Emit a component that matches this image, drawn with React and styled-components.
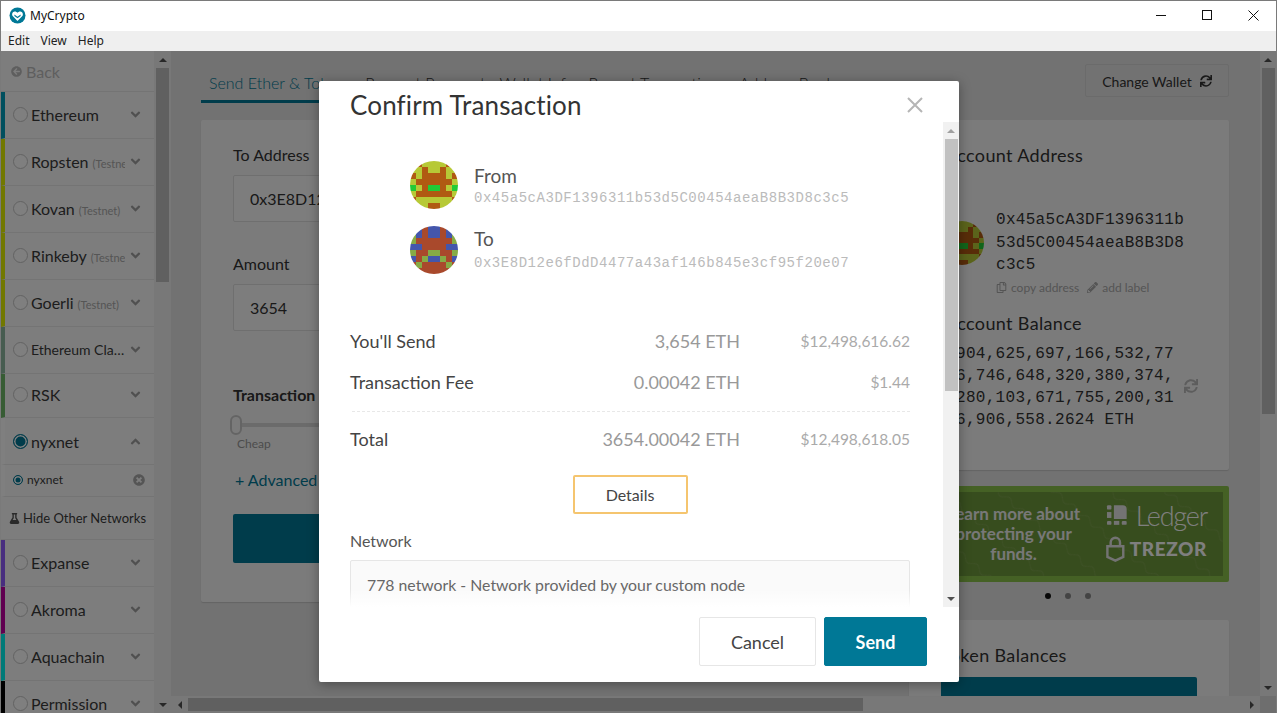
import React from 'react'
import styled, { createGlobalStyle } from 'styled-components'
import {
  FaAngleDown,
  FaAngleUp,
  FaArrowCircleLeft,
  FaFlask,
  FaPencilAlt,
  FaRegCopy,
  FaSync,
  FaTimesCircle,
} from 'react-icons/fa'

const SANS = `Lato, "Open Sans", "Liberation Sans", sans-serif`
const MONO = `"Liberation Mono", "DejaVu Sans Mono", monospace`

const GlobalStyle = createGlobalStyle`
  html, body { margin: 0; padding: 0; height: 100%; overflow: hidden; }
  * { box-sizing: border-box; }
  body { font-family: ${SANS}; color: #333; background: #fff; }
`

const Window = styled.div`
  height: 100vh;
  display: flex;
  flex-direction: column;
  border: 1px solid #7a7a7a;
  border-bottom: 0;
  overflow: hidden;
`

const TitleBar = styled.div`
  height: 30px;
  flex: none;
  display: flex;
  align-items: center;
  background: #fff;
  padding: 0 0 2px 8px;
`

const AppName = styled.div`
  font-family: "Noto Sans", "Open Sans", sans-serif;
  font-size: 12px;
  color: #111;
  margin-left: 4px;
`

const WindowControls = styled.div`
  margin-left: auto;
  display: flex;
  height: 100%;
`

const WindowButton = styled.div`
  width: 46px;
  display: flex;
  align-items: center;
  justify-content: center;
`

const MenuBar = styled.div`
  height: 20px;
  flex: none;
  display: flex;
  align-items: center;
  gap: 11px;
  padding: 0 0 2px 7px;
  background: #efefef;
  font-family: "Noto Sans", "Open Sans", sans-serif;
  font-size: 12px;
  color: #222;
`

const Body = styled.div`
  position: relative;
  flex: 1;
  min-height: 0;
  display: flex;
`

const Overlay = styled.div`
  position: absolute;
  inset: 0;
  background: rgba(0, 0, 0, 0.5);
`

/* sidebar */
const Sidebar = styled.div`
  width: 153px;
  flex: none;
  overflow: hidden;
  background: #fbfbfb;
`

const BackRow = styled.div`
  height: 41px;
  display: flex;
  align-items: center;
  gap: 4px;
  padding-left: 10px;
  font-size: 16px;
  color: #bdbdbd;
  border-bottom: 1px solid #e8e8e8;
`

const NetRow = styled.div`
  height: ${({ $height }) => $height || 47}px;
  display: flex;
  align-items: center;
  padding: 0 13px 2px 8px;
  border-left: 4px solid ${({ $color }) => $color};
  border-bottom: 1px solid #e8e8e8;
  color: #3a3a3a;
`

const ActiveNetRow = styled(NetRow)`
  padding-bottom: 0;
`

const Radio = styled.span`
  width: 15px;
  height: 15px;
  flex: none;
  border-radius: 50%;
  border: 1px solid #c4c4c4;
  background: ${({ $on }) => ($on ? '#007896' : '#fff')};
  box-shadow: ${({ $on }) => ($on ? 'inset 0 0 0 1.5px #fff' : 'none')};
  ${({ $on }) => $on && 'border-color: #007896;'}
`

const NetName = styled.div`
  flex: 1;
  min-width: 0;
  margin-left: 3px;
  margin-right: 5px;
  font-size: ${({ $small }) => ($small ? 14 : 16)}px;
  white-space: nowrap;
  overflow: hidden;
  text-overflow: ${({ $small }) => ($small ? 'ellipsis' : 'clip')};
`

const NetTag = styled.small`
  font-size: 11px;
  color: #aaa;
  margin-left: 4px;
`

const Chevron = styled.span`
  display: flex;
  width: 11px;
  justify-content: center;
  font-size: 15px;
  color: #a0a0a0;
`

const SubRow = styled.div`
  height: 32px;
  display: flex;
  align-items: center;
  padding: 0 9px 2px 8px;
  border-left: 4px solid #fff;
  border-bottom: 1px solid #e8e8e8;
  font-size: 12px;
  color: #3a3a3a;
`

const SubRadio = styled(Radio)`
  width: 10px;
  height: 10px;
  margin-right: 4px;
`

const SubRemove = styled.span`
  margin-left: auto;
  display: flex;
  font-size: 12px;
  color: #aaa;
`

const HideRow = styled.div`
  height: 43px;
  display: flex;
  align-items: center;
  gap: 3px;
  padding-left: 8px;
  font-size: 13px;
  color: #3a3a3a;
  white-space: nowrap;
  border-bottom: 1px solid #e8e8e8;
  svg { font-size: 11px; color: #555; }
`

/* fake native scrollbars */
const VBar = styled.div`
  width: ${({ $width }) => $width || 17}px;
  flex: none;
  display: flex;
  flex-direction: column;
  align-items: center;
  background: ${({ $track }) => $track || '#f1f1f1'};
`

const ArrowBox = styled.div`
  height: 17px;
  flex: none;
  display: flex;
  align-items: center;
  justify-content: center;
`

const Arrow = styled.span`
  width: 0;
  height: 0;
  border-left: 4px solid transparent;
  border-right: 4px solid transparent;
  ${({ $dir }) => ($dir === 'up' ? 'border-bottom' : 'border-top')}: 4px solid ${({ $color }) => $color || '#505050'};
`

const VThumb = styled.div`
  width: 13px;
  height: ${({ $size }) => $size}px;
  flex: none;
  background: #c1c1c1;
`

const VSpacer = styled.div`
  flex: 1;
`

const HBar = styled.div`
  height: 17px;
  flex: none;
  display: flex;
  align-items: center;
  background: #f1f1f1;
`

const HArrowBox = styled.div`
  width: 17px;
  height: 17px;
  flex: none;
  display: flex;
  align-items: center;
  justify-content: center;
`

const HArrow = styled.span`
  width: 0;
  height: 0;
  border-top: 4px solid transparent;
  border-bottom: 4px solid transparent;
  ${({ $dir }) => ($dir === 'left' ? 'border-right' : 'border-left')}: 4px solid #505050;
`

const HThumb = styled.div`
  width: 675px;
  height: 13px;
  flex: none;
  background: #c1c1c1;
`

const HCorner = styled.div`
  width: 16px;
  height: 17px;
  flex: none;
  background: #dcdcdc;
`

/* main page behind the modal */
const MainColumn = styled.div`
  flex: 1;
  min-width: 0;
  display: flex;
  flex-direction: column;
`

const MainRow = styled.div`
  flex: 1;
  min-height: 0;
  display: flex;
`

const Page = styled.div`
  flex: 1;
  min-width: 0;
  overflow: hidden;
  padding: 13px 31px 0 30px;
  background: #e4e4e4;
`

const PageHead = styled.div`
  height: 40px;
  display: flex;
  margin-bottom: 16px;
`

const Tab = styled.div`
  height: 39px;
  padding: 9px 6px 0 8px;
  font-size: 16px;
  font-weight: 300;
  white-space: nowrap;
  color: ${({ $active }) => ($active ? '#007896' : '#333')};
  border-bottom: 3px solid ${({ $active }) => ($active ? '#007896' : 'transparent')};
`

const ChangeWallet = styled.div`
  margin-left: auto;
  width: 144px;
  height: 33px;
  display: flex;
  align-items: center;
  justify-content: center;
  gap: 8px;
  padding-top: 1px;
  font-size: 14px;
  color: #333;
  border: 1px solid #d6d6d6;
  border-radius: 2px;
  svg { font-size: 12px; }
`

const PageGrid = styled.div`
  display: grid;
  grid-template-columns: 692px 320px;
  gap: 16px;
`

const Card = styled.div`
  background: #f7f7f7;
  border-radius: 2px;
  box-shadow: 0 1px 1px rgba(0, 0, 0, 0.12);
`

const FormCard = styled(Card)`
  height: 482px;
  padding: 24px 32px;
`

const FieldLabel = styled.div`
  font-size: 16px;
  line-height: 22px;
  margin-bottom: 9px;
  font-weight: ${({ $bold }) => ($bold ? 700 : 400)};
  margin-top: ${({ $bold }) => ($bold ? 53 : 0)}px;
`

const TextBox = styled.div`
  height: 47px;
  display: flex;
  align-items: center;
  padding-left: 16px;
  font-size: 16px;
  color: #333;
  background: #fbfbfb;
  border: 1px solid #dedede;
  border-radius: 2px;
  margin-bottom: 31px;
`

const Slider = styled.div`
  display: flex;
  align-items: center;
  margin: 2px 0 0 -3px;
`

const SliderKnob = styled.span`
  width: 12px;
  height: 20px;
  flex: none;
  border-radius: 7px;
  background: #f7f7f7;
  border: 2px solid #c9c9c9;
`

const SliderTrack = styled.span`
  flex: 1;
  height: 4px;
  background: #d6d6d6;
`

const Cheap = styled.div`
  font-size: 12px;
  color: #999;
  margin: 1px 0 0 4px;
`

const AdvancedLink = styled.div`
  font-size: 16px;
  color: #007896;
  margin: 19px 0 25px 2px;
`

const SendButton = styled.div`
  height: 49px;
  background: #007896;
  border-radius: 2px;
`

const SideColumn = styled.div`
  display: flex;
  flex-direction: column;
`

const AccountCard = styled(Card)`
  height: 350px;
  padding: 24px 31px;
  margin-bottom: 16px;
`

const SideHeading = styled.div`
  font-size: 18px;
  line-height: 23px;
  letter-spacing: 0.35px;
  margin-left: 5px;
`

const AddressRow = styled.div`
  display: flex;
  align-items: flex-start;
  gap: 12px;
  margin-top: 42px;
`

const AvatarSlot = styled.div`
  margin-top: 12px;
  display: flex;
`

const MonoBlock = styled.div`
  width: 195px;
  font-family: ${MONO};
  font-size: 16px;
  letter-spacing: 0.3px;
  line-height: 22.5px;
  word-break: break-all;
  color: #333;
`

const SmallLinks = styled.div`
  display: flex;
  align-items: center;
  gap: 8px;
  margin-top: 3px;
  font-size: 12px;
  color: #aaa;
  svg { font-size: 11px; margin-right: 4px; }
`

const LinkItem = styled.span`
  display: flex;
  align-items: center;
`

const BalanceHeading = styled(SideHeading)`
  margin-top: 17px;
`

const BalanceRow = styled.div`
  display: flex;
  align-items: center;
  margin: 8px 0 0 16px;
`

const BalanceText = styled(MonoBlock)`
  width: 222px;
  flex: none;
  line-height: 22px;
`

const Refresh = styled.span`
  display: flex;
  font-size: 14px;
  color: #bbb;
  margin: 0 0 2px 6px;
`

const Ad = styled.div`
  position: relative;
  height: 96px;
  display: flex;
  align-items: center;
  padding-right: 16px;
  background: #6f9a3c;
  border: 6px solid #8bc34a;
  border-radius: 2px;
  color: #fff;
  overflow: hidden;
`

const AdPattern = styled.svg`
  position: absolute;
  inset: 0;
  width: 100%;
  height: 100%;
`

const AdText = styled.div`
  position: relative;
  flex: 1;
  font-size: 17px;
  font-weight: 700;
  line-height: 20px;
  text-align: center;
  padding-left: 20px;
  color: #f0f0f0;
`

const AdLogos = styled.div`
  position: relative;
  width: 101px;
  flex: none;
  margin: 0 0 4px 14px;
  display: flex;
  flex-direction: column;
  gap: 6px;
`

const LogoLine = styled.div`
  display: flex;
  align-items: center;
  gap: ${({ $gap }) => $gap}px;
`

const LedgerWord = styled.span`
  font-size: 27px;
  line-height: 27px;
  font-weight: 300;
  letter-spacing: -1.2px;
`

const TrezorWord = styled.span`
  font-size: 19px;
  line-height: 22px;
  font-weight: 900;
  letter-spacing: 0.6px;
`

const Dots = styled.div`
  display: flex;
  justify-content: center;
  gap: 14px;
  height: 38px;
  padding: 11px 2px 0 0;
`

const Dot = styled.span`
  width: 6px;
  height: 6px;
  border-radius: 50%;
  background: ${({ $on }) => ($on ? '#111' : '#888')};
`

const TokenCard = styled(Card)`
  height: 200px;
  padding: 24px 32px;
`

const TokenHeading = styled(SideHeading)`
  margin: 0 0 10px 0;
`

const TokenButton = styled.div`
  height: 49px;
  background: #007896;
  border-radius: 2px;
`

/* modal */
const Modal = styled.div`
  position: absolute;
  left: 318px;
  top: 30px;
  width: 640px;
  height: 601px;
  display: flex;
  flex-direction: column;
  background: #fff;
  border-radius: 2px;
  box-shadow: 0 2px 12px rgba(0, 0, 0, 0.35);
`

const ModalHead = styled.div`
  height: 41px;
  flex: none;
  display: flex;
  align-items: center;
  justify-content: space-between;
  padding: 6px 36px 0 31px;
`

const ModalTitle = styled.div`
  font-size: 26px;
  letter-spacing: 0.15px;
  color: #333;
`

const ModalMiddle = styled.div`
  flex: 1;
  min-height: 0;
  display: flex;
`

const ModalScroll = styled.div`
  position: relative;
  flex: 1;
  min-width: 0;
  overflow: hidden;
  padding: 39px 33px 0 31px;
`

const ScrollFade = styled.div`
  position: absolute;
  left: 0;
  right: 0;
  bottom: 0;
  height: 18px;
  background: linear-gradient(rgba(255, 255, 255, 0), #fff);
`

const Parties = styled.div`
  display: flex;
  flex-direction: column;
  gap: 17px;
  margin-left: 60px;
  margin-bottom: 46px;
`

const Party = styled.div`
  display: flex;
  align-items: center;
  gap: 16px;
`

const PartyText = styled.div`
  padding-top: 2px;
`

const PartyName = styled.div`
  font-size: 19px;
  line-height: 24px;
  color: #555;
  ${({ $lift }) => $lift && 'margin: -2px 0 2px;'}
`

const PartyAddress = styled.div`
  font-family: ${MONO};
  font-size: 14px;
  letter-spacing: 0.53px;
  line-height: 20px;
  color: #bbb;
`

const SumRow = styled.div`
  height: 41px;
  display: grid;
  grid-template-columns: 1fr 220px 170px;
  align-items: center;
  font-size: 18px;
  color: #444;
`

const SumAmount = styled.div`
  text-align: right;
  color: #999;
`

const SumFiat = styled.div`
  text-align: right;
  font-size: 15.5px;
  color: #aaa;
`

const SumRule = styled.div`
  margin: 9px 0 6px 2px;
  border-top: 1px dashed #e8e8e8;
`

const DetailsWrap = styled.div`
  display: flex;
  justify-content: center;
  margin: 16px 0 18px;
`

const DetailsButton = styled.div`
  width: 115px;
  height: 39px;
  display: flex;
  align-items: center;
  justify-content: center;
  font-size: 16px;
  color: #444;
  border: 2px solid #f5c56f;
  border-radius: 2px;
`

const NetworkLabel = styled.div`
  font-size: 16px;
  line-height: 18px;
  color: #555;
  margin-bottom: 10px;
`

const NetworkField = styled.div`
  height: 60px;
  padding: 14px 16px;
  font-size: 15.8px;
  line-height: 20px;
  color: #666;
  background: #fafafa;
  border: 1px solid #e6e6e6;
  border-radius: 2px;
`

const ModalFoot = styled.div`
  height: 75px;
  flex: none;
  display: flex;
  justify-content: flex-end;
  gap: 8px;
  padding: 10px 32px 0 0;
`

const FootButton = styled.div`
  width: ${({ $width }) => $width}px;
  height: 49px;
  display: flex;
  align-items: center;
  justify-content: center;
  font-size: 18px;
  border-radius: 2px;
  color: ${({ $primary }) => ($primary ? '#fff' : '#444')};
  font-weight: ${({ $primary }) => ($primary ? 700 : 400)};
  background: ${({ $primary }) => ($primary ? '#007896' : '#fff')};
  border: 1px solid ${({ $primary }) => ($primary ? '#007896' : '#e6e6e6')};
`

const CloseIcon = styled.svg`
  display: block;
`

const AvatarSvg = styled.svg`
  display: block;
  flex: none;
  border-radius: 50%;
`

const FROM_BLOCKS = {
  colors: { L: '#b7c936', S: '#b05a12', G: '#22cb35' },
  rows: ['LSLLLLSL', 'LLSLLSLL', 'SLSSSSLS', 'LSSSSSSL', 'GLSGGSLG', 'LSSSSSSL', 'SLLLLLLS', 'LLLSSLLL'],
}

const TO_BLOCKS = {
  colors: { B: '#4456ac', R: '#a9492c', G: '#86ab46' },
  rows: ['RBRBBRBR', 'GBRBBRBG', 'GRRRRRRG', 'BBRRRRBB', 'GRRGGRRG', 'BRGBBGRB', 'RGRRRRGR', 'RRRRRRRR'],
}

const Blockie = ({ data, size }) => (
  <AvatarSvg width={size} height={size} viewBox="0 0 8 8" shapeRendering="crispEdges">
    {data.rows.map((row, y) =>
      row.split('').map((c, x) => <rect key={`${x}-${y}`} x={x} y={y} width="1" height="1" fill={data.colors[c]} />)
    )}
  </AvatarSvg>
)

const Logo = () => (
  <svg width="17" height="17" viewBox="0 0 17 17">
    <circle cx="8.5" cy="8.5" r="8" fill="#007896" />
    <path d="M8.5 14 L3.4 8.8 C2.6 7 3.4 4.6 5.6 4.4 C6.8 4.3 7.8 4.9 8.5 5.8 C9.2 4.9 10.2 4.3 11.4 4.4 C13.6 4.6 14.4 7 13.6 8.8 Z" fill="#fff" />
    <path d="M5.4 7.6 L8.5 9.8 L11.6 7.6 L11.6 9 L8.5 11.2 L5.4 9 Z" fill="#007896" />
  </svg>
)

const NETWORKS_TOP = [
  { name: 'Ethereum', color: '#009fbd' },
  { name: 'Ropsten', tag: '(Testnet)', color: '#e2f000' },
  { name: 'Kovan', tag: '(Testnet)', color: '#e2f000' },
  { name: 'Rinkeby', tag: '(Testnet)', color: '#e2f000' },
  { name: 'Goerli', tag: '(Testnet)', color: '#e2f000' },
  { name: 'Ethereum Classic', color: '#8fb8a0', small: true },
  { name: 'RSK', color: '#6fb868', height: 44 },
]

const NETWORKS_BOTTOM = [
  { name: 'Expanse', color: '#905cff' },
  { name: 'Akroma', color: '#c000a0' },
  { name: 'Aquachain', color: '#00f5f0' },
  { name: 'Permission', color: '#000' },
]

const TABS = ['Send Ether & Tokens', 'Request Payment', 'Wallet Info', 'Recent Transactions', 'Address Book']

const Network = ({ item }) => (
  <NetRow $color={item.color} $height={item.height}>
    <Radio />
    <NetName $small={item.small}>
      {item.name}
      {item.tag && <NetTag>{item.tag}</NetTag>}
    </NetName>
    <Chevron>
      <FaAngleDown />
    </Chevron>
  </NetRow>
)

const App = () => {
  return (
    <>
      <GlobalStyle />
      <Window>
        <TitleBar>
          <Logo />
          <AppName>MyCrypto</AppName>
          <WindowControls>
            <WindowButton>
              <svg width="11" height="11" viewBox="0 0 11 11">
                <path d="M0 5.5h10" stroke="#111" fill="none" />
              </svg>
            </WindowButton>
            <WindowButton>
              <svg width="11" height="11" viewBox="0 0 11 11">
                <rect x="0.5" y="0.5" width="9" height="9" stroke="#111" fill="none" />
              </svg>
            </WindowButton>
            <WindowButton>
              <svg width="11" height="11" viewBox="0 0 11 11">
                <path d="M0.5 0.5l10 10M10.5 0.5l-10 10" stroke="#111" fill="none" />
              </svg>
            </WindowButton>
          </WindowControls>
        </TitleBar>
        <MenuBar>
          <span>Edit</span>
          <span>View</span>
          <span>Help</span>
        </MenuBar>
        <Body>
          <Sidebar>
            <BackRow>
              <FaArrowCircleLeft size={11} />
              Back
            </BackRow>
            {NETWORKS_TOP.map((item) => (
              <Network key={item.name} item={item} />
            ))}
            <ActiveNetRow $color="#fff">
              <Radio $on />
              <NetName>nyxnet</NetName>
              <Chevron>
                <FaAngleUp />
              </Chevron>
            </ActiveNetRow>
            <SubRow>
              <SubRadio $on />
              nyxnet
              <SubRemove>
                <FaTimesCircle />
              </SubRemove>
            </SubRow>
            <HideRow>
              <FaFlask />
              Hide Other Networks
            </HideRow>
            {NETWORKS_BOTTOM.map((item) => (
              <Network key={item.name} item={item} />
            ))}
          </Sidebar>
          <VBar $width={17}>
            <ArrowBox>
              <Arrow $dir="up" />
            </ArrowBox>
            <VThumb $size={214} />
            <VSpacer />
            <ArrowBox>
              <Arrow $dir="down" />
            </ArrowBox>
          </VBar>
          <MainColumn>
            <MainRow>
              <Page>
                <PageHead>
                  {TABS.map((t, i) => (
                    <Tab key={t} $active={i === 0}>
                      {t}
                    </Tab>
                  ))}
                  <ChangeWallet>
                    Change Wallet
                    <FaSync />
                  </ChangeWallet>
                </PageHead>
                <PageGrid>
                  <FormCard>
                    <FieldLabel>To Address</FieldLabel>
                    <TextBox>0x3E8D12e6fDdD4477a43af146b845e3cf95f20e07</TextBox>
                    <FieldLabel>Amount</FieldLabel>
                    <TextBox>3654</TextBox>
                    <FieldLabel $bold>Transaction Fee</FieldLabel>
                    <Slider>
                      <SliderKnob />
                      <SliderTrack />
                    </Slider>
                    <Cheap>Cheap</Cheap>
                    <AdvancedLink>+ Advanced</AdvancedLink>
                    <SendButton />
                  </FormCard>
                  <SideColumn>
                    <AccountCard>
                      <SideHeading>Account Address</SideHeading>
                      <AddressRow>
                        <AvatarSlot>
                          <Blockie data={FROM_BLOCKS} size={44} />
                        </AvatarSlot>
                        <div>
                          <MonoBlock>0x45a5cA3DF1396311b53d5C00454aeaB8B3D8c3c5</MonoBlock>
                          <SmallLinks>
                            <LinkItem>
                              <FaRegCopy />
                              copy address
                            </LinkItem>
                            <LinkItem>
                              <FaPencilAlt />
                              add label
                            </LinkItem>
                          </SmallLinks>
                        </div>
                      </AddressRow>
                      <BalanceHeading>Account Balance</BalanceHeading>
                      <BalanceRow>
                        <BalanceText>904,625,697,166,532,776,746,648,320,380,374,280,103,671,755,200,316,906,558.2624 ETH</BalanceText>
                        <Refresh>
                          <FaSync />
                        </Refresh>
                      </BalanceRow>
                    </AccountCard>
                    <Ad>
                      <AdPattern aria-hidden="true">
                        <defs>
                          <pattern id="ad-waves" width="36" height="36" patternUnits="userSpaceOnUse" patternTransform="rotate(40)">
                            <path d="M0 18 q4.5 -5 9 0 t9 0 t9 0 t9 0" stroke="rgba(255,255,255,0.09)" fill="none" />
                          </pattern>
                        </defs>
                        <rect width="100%" height="100%" fill="url(#ad-waves)" />
                      </AdPattern>
                      <AdText>Learn more about protecting your funds.</AdText>
                      <AdLogos>
                        <LogoLine $gap={8}>
                          <svg width="22" height="22" viewBox="0 0 22 22">
                            <path d="M8 1h9a4 4 0 0 1 4 4v10H8z" fill="#e6e6e6" />
                            <rect x="1" y="1" width="4.5" height="4.5" rx="1.2" fill="#e6e6e6" />
                            <rect x="1" y="8" width="4.5" height="6" fill="#e6e6e6" />
                            <rect x="1" y="17" width="4.5" height="4" rx="1.2" fill="#e6e6e6" />
                            <rect x="8" y="17" width="5.5" height="4" fill="#e6e6e6" />
                            <rect x="16" y="17" width="5" height="4" rx="1.2" fill="#e6e6e6" />
                          </svg>
                          <LedgerWord>Ledger</LedgerWord>
                        </LogoLine>
                        <LogoLine $gap={5}>
                          <svg width="20" height="28" viewBox="0 0 20 28">
                            <path d="M5 11V7a5 5 0 0 1 10 0v4" stroke="#e6e6e6" strokeWidth="2.6" fill="none" />
                            <path d="M1.5 11h17v11.5L10 26.5 1.5 22.5z" stroke="#e6e6e6" strokeWidth="2.6" fill="none" />
                          </svg>
                          <TrezorWord>TREZOR</TrezorWord>
                        </LogoLine>
                      </AdLogos>
                    </Ad>
                    <Dots>
                      <Dot $on />
                      <Dot />
                      <Dot />
                    </Dots>
                    <TokenCard>
                      <TokenHeading>Token Balances</TokenHeading>
                      <TokenButton />
                    </TokenCard>
                  </SideColumn>
                </PageGrid>
              </Page>
              <VBar $width={16}>
                <ArrowBox>
                  <Arrow $dir="up" />
                </ArrowBox>
                <VThumb $size={346} />
                <VSpacer />
                <ArrowBox>
                  <Arrow $dir="down" />
                </ArrowBox>
              </VBar>
            </MainRow>
            <HBar>
              <HArrowBox>
                <HArrow $dir="left" />
              </HArrowBox>
              <HThumb />
              <VSpacer />
              <HArrowBox>
                <HArrow $dir="right" />
              </HArrowBox>
              <HCorner />
            </HBar>
          </MainColumn>
          <Overlay />
          <Modal>
            <ModalHead>
              <ModalTitle>Confirm Transaction</ModalTitle>
              <CloseIcon width="16" height="16" viewBox="0 0 16 16">
                <path d="M1 1l14 14M15 1L1 15" stroke="#b5b5b5" strokeWidth="2" fill="none" />
              </CloseIcon>
            </ModalHead>
            <ModalMiddle>
              <ModalScroll>
                <Parties>
                  <Party>
                    <Blockie data={FROM_BLOCKS} size={48} />
                    <PartyText>
                      <PartyName>From</PartyName>
                      <PartyAddress>0x45a5cA3DF1396311b53d5C00454aeaB8B3D8c3c5</PartyAddress>
                    </PartyText>
                  </Party>
                  <Party>
                    <Blockie data={TO_BLOCKS} size={48} />
                    <PartyText>
                      <PartyName $lift>To</PartyName>
                      <PartyAddress>0x3E8D12e6fDdD4477a43af146b845e3cf95f20e07</PartyAddress>
                    </PartyText>
                  </Party>
                </Parties>
                <SumRow>
                  <div>You'll Send</div>
                  <SumAmount>3,654 ETH</SumAmount>
                  <SumFiat>$12,498,616.62</SumFiat>
                </SumRow>
                <SumRow>
                  <div>Transaction Fee</div>
                  <SumAmount>0.00042 ETH</SumAmount>
                  <SumFiat>$1.44</SumFiat>
                </SumRow>
                <SumRule />
                <SumRow>
                  <div>Total</div>
                  <SumAmount>3654.00042 ETH</SumAmount>
                  <SumFiat>$12,498,618.05</SumFiat>
                </SumRow>
                <DetailsWrap>
                  <DetailsButton>Details</DetailsButton>
                </DetailsWrap>
                <NetworkLabel>Network</NetworkLabel>
                <NetworkField>778 network - Network provided by your custom node</NetworkField>
                <ScrollFade />
              </ModalScroll>
              <VBar $width={16}>
                <ArrowBox>
                  <Arrow $dir="up" $color="#a0a0a0" />
                </ArrowBox>
                <VThumb $size={252} />
                <VSpacer />
                <ArrowBox>
                  <Arrow $dir="down" />
                </ArrowBox>
              </VBar>
            </ModalMiddle>
            <ModalFoot>
              <FootButton $width={117}>Cancel</FootButton>
              <FootButton $width={103} $primary>
                Send
              </FootButton>
            </ModalFoot>
          </Modal>
        </Body>
      </Window>
    </>
  )
}

export default App
